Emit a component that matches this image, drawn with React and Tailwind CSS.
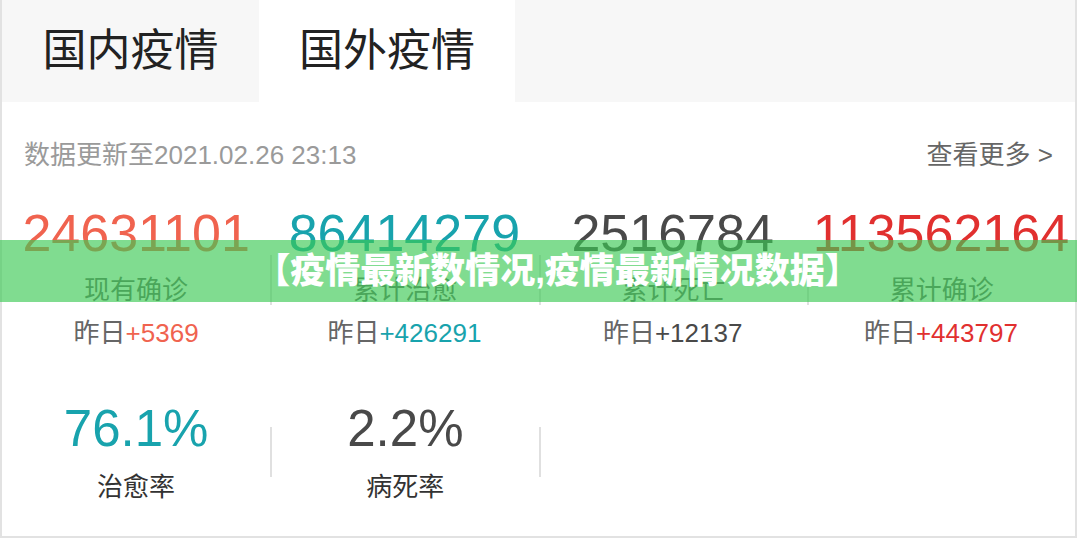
import React from "react";

const stats = [
  { num: "24631101", numColor: "text-[#f0634f]", label: "现有确诊", inc: "+5369", incColor: "text-[#f0634f]" },
  { num: "86414279", numColor: "text-[#18a3ad]", label: "累计治愈", inc: "+426291", incColor: "text-[#18a3ad]" },
  { num: "2516784", numColor: "text-[#494949]", label: "累计死亡", inc: "+12137", incColor: "text-[#494949]" },
  { num: "113562164", numColor: "text-[#e1302f]", label: "累计确诊", inc: "+443797", incColor: "text-[#e1302f]" },
];

export default function App() {
  return (
    <div className="relative w-[1077px] h-[542px] bg-white overflow-hidden font-['Liberation_Sans','Noto_Sans_CJK_SC',sans-serif]">
      <div className="h-[538px] border-x-2 border-b-2 border-[#e2e2e2] flex flex-col">
        <div className="h-[102px] flex bg-[#f7f7f7] shrink-0">
          <div className="w-[257px] flex items-center justify-center text-[44px] text-[#222]">国内疫情</div>
          <div className="w-[256px] flex items-center justify-center text-[44px] text-[#222] bg-white">国外疫情</div>
        </div>

        <div className="flex justify-between items-center pt-[38px] pl-[22px] pr-[22px] text-[26px] leading-[30px]">
          <span className="text-[#9a9a9a]">数据更新至2021.02.26 23:13</span>
          <span className="text-[#666]">查看更多 &gt;</span>
        </div>

        <div className="grid grid-cols-4 mt-[35px]">
          {stats.map((s, i) => (
            <div key={i} className="flex flex-col items-center">
              <div className={`h-[50px] text-[52px] leading-[56px] ${s.numColor}`}>{s.num}</div>
              <div
                className={`w-full h-[50px] pt-[20px] text-center text-[26px] leading-[30px] text-[#666] ${
                  i > 0 ? "border-l-2 border-[#e0e0e0]" : ""
                }`}
              >
                {s.label}
              </div>
              <div className="mt-[12px] text-[26px] leading-[32px] text-[#666]">
                昨日<span className={s.incColor}>{s.inc}</span>
              </div>
            </div>
          ))}
        </div>

        <div className="grid grid-cols-4 mt-[52px]">
          <div className="flex items-center">
            <div className="flex-1 flex flex-col items-center">
              <div className="text-[51px] leading-[56px] text-[#18a3ad]">76.1%</div>
              <div className="mt-[14px] text-[26px] leading-[32px] text-[#333]">治愈率</div>
            </div>
          </div>
          <div className="flex items-center">
            <div className="w-[2px] h-[50px] bg-[#e0e0e0]" />
            <div className="flex-1 flex flex-col items-center">
              <div className="text-[51px] leading-[56px] text-[#494949]">2.2%</div>
              <div className="mt-[14px] text-[26px] leading-[32px] text-[#333]">病死率</div>
            </div>
          </div>
          <div className="flex items-center">
            <div className="w-[2px] h-[50px] bg-[#e0e0e0]" />
          </div>
          <div />
        </div>
      </div>

      <div className="absolute left-0 right-0 top-[240px] h-[62px] flex items-center justify-center bg-[rgba(60,201,84,0.65)] text-white text-[35px] font-black pl-[38px]">
        【疫情最新数情况,疫情最新情况数据】
      </div>
    </div>
  );
}
